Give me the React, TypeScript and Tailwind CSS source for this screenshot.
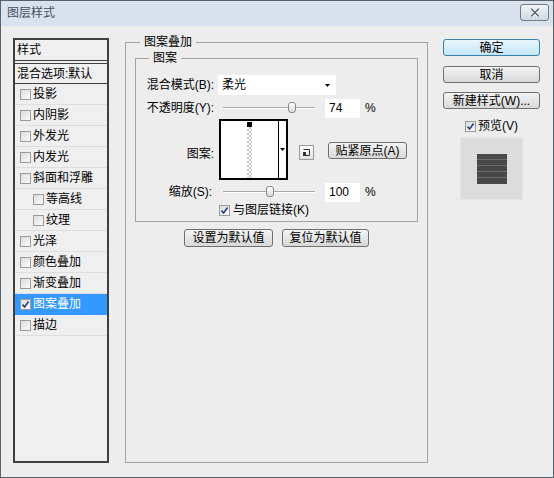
import clsx from "clsx";
import type { ReactNode } from "react";

const styles = [
  { label: "投影" },
  { label: "内阴影" },
  { label: "外发光" },
  { label: "内发光" },
  { label: "斜面和浮雕" },
  { label: "等高线", indent: true },
  { label: "纹理", indent: true },
  { label: "光泽" },
  { label: "颜色叠加" },
  { label: "渐变叠加" },
  { label: "图案叠加", checked: true, selected: true },
  { label: "描边" },
];

function Check({ checked }: { checked?: boolean }) {
  return (
    <span className="flex h-[11px] w-[11px] shrink-0 items-center justify-center border border-[#9a9b9b] bg-linear-to-br from-[#dcdcdc] to-[#fbfbfb]">
      {checked && (
        <svg width="9" height="9" viewBox="0 0 9 9">
          <path d="M1.5 4.6 L3.6 7 L7.6 1.6" stroke="#27457a" strokeWidth="1.7" fill="none" />
        </svg>
      )}
    </span>
  );
}

function Btn({ children, className, primary }: { children: ReactNode; className?: string; primary?: boolean }) {
  return (
    <button
      className={clsx(
        "flex items-center justify-center rounded-[3px] border text-[12px] leading-none text-black",
        primary
          ? "border-[#3c7fb1] bg-linear-to-b from-[#eaf6fd] to-[#c4e5f6]"
          : "border-[#707070] bg-linear-to-b from-[#f4f4f4] to-[#d8d8d8]",
        className,
      )}
    >
      {children}
    </button>
  );
}

function Arrow() {
  return (
    <svg width="5" height="3" viewBox="0 0 5 3">
      <path d="M0 0 H5 L2.5 3 Z" fill="#000" />
    </svg>
  );
}

function Slider({ pos }: { pos: number }) {
  return (
    <div className="flex h-full w-[102px] items-center px-[5px]">
      <div className="relative h-[2px] w-full border-t border-b border-t-[#a9a9a9] border-b-white">
        <span
          className="absolute top-[-6px] h-[11px] w-[8px] rounded-[3px] border border-[#8a8a8a] bg-linear-to-b from-white to-[#d9d9d9]"
          style={{ left: pos }}
        />
      </div>
    </div>
  );
}

function NumBox({ value }: { value: string }) {
  return (
    <>
      <div className="ml-[5px] flex h-[19px] w-[35px] items-center bg-white pl-[4px]">{value}</div>
      <span className="ml-[5px]">%</span>
    </>
  );
}

export default function App() {
  return (
    <div className="flex h-[478px] w-[554px] flex-col overflow-hidden border border-[#59616a] bg-[#ededed] font-['Liberation_Sans','Noto_Sans_CJK_SC',sans-serif] text-[12px] leading-none text-black">
      {/* title bar */}
      <div className="flex h-[25px] shrink-0 items-start justify-between bg-[#d9e2ec] pr-[4px] pt-[3px]">
        <span className="ml-[6px] mt-[3px] text-[12px] text-[#46505c]">图层样式</span>
        <button className="flex h-[17px] w-[29px] items-center justify-center rounded-[3px] border border-[#707c88] bg-linear-to-b from-[#f2f5f8] to-[#cfd8e2]">
          <svg width="10" height="9" viewBox="0 0 10 9">
            <path d="M1.5 1 L8.5 8 M8.5 1 L1.5 8" stroke="#fff" strokeWidth="3.2" strokeLinecap="round" />
            <path d="M1.5 1 L8.5 8 M8.5 1 L1.5 8" stroke="#5b6570" strokeWidth="1.6" strokeLinecap="round" />
          </svg>
        </button>
      </div>

      <div className="flex flex-1 items-start pl-[12px] pt-[8px]">
        {/* style list */}
        <div className="mt-[4px] flex h-[425px] w-[96px] shrink-0 flex-col border-2 border-[#404040] bg-[#efefef]">
          <div className="flex h-[21px] items-center border-b border-[#404040] pl-[2px]">样式</div>
          <div className="mt-[2px] flex h-[21px] items-center border-y border-[#404040] pl-[2px]">混合选项:默认</div>
          {styles.map((s) => (
            <div
              key={s.label}
              className={clsx(
                "flex h-[21px] items-center gap-[2px] border-b",
                s.indent ? "pl-[18px]" : "pl-[5px]",
                s.selected ? "border-[#3399ff] bg-[#3399ff] text-white" : "border-[#dedede]",
              )}
            >
              <Check checked={s.checked} />
              <span>{s.label}</span>
            </div>
          ))}
        </div>

        {/* pattern overlay group */}
        <fieldset className="ml-[16px] h-[429px] w-[303px] shrink-0 border border-[#a3a3a3] px-[9px]">
          <legend className="ml-[5px] px-[4px] leading-[16px]">图案叠加</legend>
          <fieldset className="border border-[#a3a3a3] pb-[4px]">
            <legend className="ml-[13px] px-[4px] leading-[16px]">图案</legend>

            <div className="mt-[9px] flex h-[20px] items-center">
              <span className="w-[78px] text-right">混合模式(B):</span>
              <div className="ml-[4px] flex h-[20px] w-[118px] items-center justify-between bg-white pl-[4px] pr-[6px]">
                <span>柔光</span>
                <Arrow />
              </div>
            </div>

            <div className="mt-[3px] flex h-[20px] items-center">
              <span className="w-[78px] text-right">不透明度(Y):</span>
              <div className="ml-[4px] flex h-full items-center">
                <Slider pos={65} />
                <NumBox value="74" />
              </div>
            </div>

            <div className="mt-[1px] flex h-[61px] items-center">
              <span className="mt-[8px] w-[78px] text-right">图案:</span>
              <div className="ml-[5px] flex h-[61px] w-[69px] border-2 border-black bg-white">
                <div className="flex flex-1 flex-col items-center pt-[1px]">
                  <div className="h-[5px] w-[5px] bg-black" />
                  <div className="w-[5px] flex-1 bg-[repeating-conic-gradient(#c4c4c4_0%_25%,#ffffff_0%_50%)] bg-[length:4px_4px]" />
                </div>
                <div className="flex w-[8px] items-center justify-center border-l border-black">
                  <Arrow />
                </div>
              </div>
              <button className="ml-[11px] mt-[6px] flex h-[15px] w-[15px] items-center justify-center border border-[#9a9a9a] bg-linear-to-b from-white to-[#e2e2e2]">
                <svg width="9" height="7" viewBox="0 0 9 7">
                  <path d="M1.5 0.5 H7.5 V6.5 H1.5" stroke="#333" fill="none" />
                  <rect x="1" y="3" width="3" height="4" fill="#333" />
                </svg>
              </button>
              <Btn className="ml-[14px] mt-[2px] h-[17px] w-[79px]">贴紧原点(A)</Btn>
            </div>

            <div className="mt-[2px] flex h-[20px] items-center">
              <span className="w-[76px] text-right">缩放(S):</span>
              <div className="ml-[6px] flex h-full items-center">
                <Slider pos={43} />
                <NumBox value="100" />
              </div>
            </div>

            <div className="mt-[1px] flex h-[14px] items-center gap-[3px] pl-[83px]">
              <Check checked />
              <span>与图层链接(K)</span>
            </div>
          </fieldset>

          <div className="mt-[7px] flex justify-center gap-[9px]">
            <Btn className="h-[18px] w-[89px]">设置为默认值</Btn>
            <Btn className="h-[18px] w-[87px]">复位为默认值</Btn>
          </div>
        </fieldset>

        {/* buttons */}
        <div className="ml-[15px] mt-[5px] flex w-[97px] shrink-0 flex-col items-center">
          <Btn primary className="h-[17px] w-full">确定</Btn>
          <Btn className="mt-[10px] h-[17px] w-full">取消</Btn>
          <Btn className="mt-[9px] h-[17px] w-full">新建样式(W)...</Btn>
          <div className="mt-[11px] flex h-[12px] items-center gap-[2px]">
            <Check checked />
            <span>预览(V)</span>
          </div>
          <div className="mt-[5px] flex h-[63px] w-[63px] items-center justify-center border border-[#e6e6e6] bg-[#dcdcdc]">
            <div className="flex h-[30px] w-[30px] flex-col gap-[1px] bg-[#6a6a6a]">
              <div className="flex-1 bg-[#484848]" />
              <div className="flex-1 bg-[#484848]" />
              <div className="flex-1 bg-[#484848]" />
              <div className="flex-1 bg-[#484848]" />
              <div className="flex-1 bg-[#484848]" />
            </div>
          </div>
        </div>
      </div>
    </div>
  );
}
